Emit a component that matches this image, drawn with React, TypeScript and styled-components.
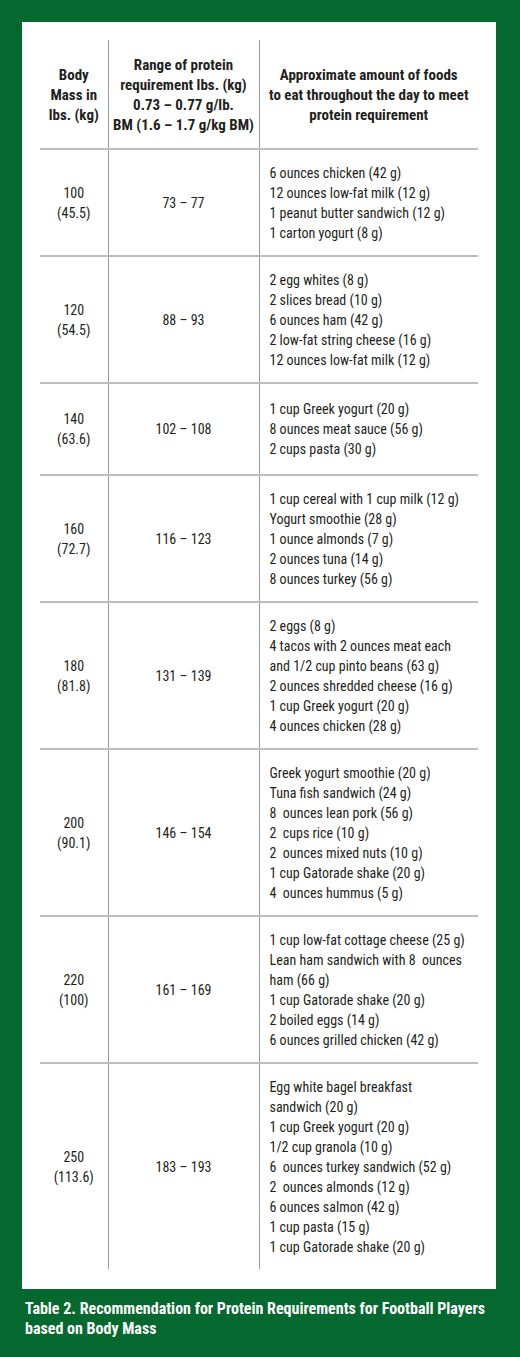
import React from 'react';
import styled, { createGlobalStyle } from 'styled-components';

const GlobalStyle = createGlobalStyle`
  html, body {
    margin: 0;
    padding: 0;
    background: #05692f; /* green */
  }
`;

const Page = styled.div`
  width: 520px;
  height: 1357px;
  overflow: hidden;
  box-sizing: border-box;
  padding: 22px 24px 0 22px;
  background: #05692f;
  font-family: "Roboto Condensed", Roboto, "Liberation Sans", sans-serif;
  font-stretch: condensed;
  color: #231f20;
`;

const Panel = styled.div`
  background: #ffffff;
  padding: 18px 18px 20px 18px;
`;

const Table = styled.table`
  width: 438px;
  border-collapse: collapse;
  table-layout: fixed;
  font-size: 14px;
  line-height: 20px;
`;

const Row = styled.tr<{ $last?: boolean }>`
  border-bottom: ${(p) => (p.$last ? 'none' : '2px solid #bdbdbd')};
`;

const HeadCell = styled.th`
  padding: 15px 0 13px;
  font-size: 15px;
  font-weight: bold;
  text-align: center;
  vertical-align: middle;
  white-space: nowrap;
  & + & {
    border-left: 1px solid #9a9a9a;
  }
`;

const Cell = styled.td<{ $left?: boolean; $loose?: boolean }>`
  padding: ${(p) => (p.$loose ? '15px 0 15px' : '13px 0 12px')};
  padding-left: ${(p) => (p.$left ? 10 : 0)}px;
  text-align: ${(p) => (p.$left ? 'left' : 'center')};
  vertical-align: middle;
  white-space: pre;
  & + & {
    border-left: 1px solid #9a9a9a;
  }
`;

const Caption = styled.p`
  margin: 10px 0 0 3px;
  color: #ffffff;
  font-weight: bold;
  font-size: 16px;
  line-height: 20px;
`;

type Entry = { mass: string; kg: string; range: string; foods: string[]; loose?: boolean };

const rows: Entry[] = [
  {
    mass: '100',
    kg: '(45.5)',
    range: '73 – 77',
    foods: [
      '6 ounces chicken (42 g)',
      '12 ounces low-fat milk (12 g)',
      '1 peanut butter sandwich (12 g)',
      '1 carton yogurt (8 g)',
    ],
  },
  {
    mass: '120',
    kg: '(54.5)',
    range: '88 – 93',
    foods: [
      '2 egg whites (8 g)',
      '2 slices bread (10 g)',
      '6 ounces ham (42 g)',
      '2 low-fat string cheese (16 g)',
      '12 ounces low-fat milk (12 g)',
    ],
  },
  {
    mass: '140',
    kg: '(63.6)',
    range: '102 – 108',
    loose: true,
    foods: ['1 cup Greek yogurt (20 g)', '8 ounces meat sauce (56 g)', '2 cups pasta (30 g)'],
  },
  {
    mass: '160',
    kg: '(72.7)',
    range: '116 – 123',
    foods: [
      '1 cup cereal with 1 cup milk (12 g)',
      'Yogurt smoothie (28 g)',
      '1 ounce almonds (7 g)',
      '2 ounces tuna (14 g)',
      '8 ounces turkey (56 g)',
    ],
  },
  {
    mass: '180',
    kg: '(81.8)',
    range: '131 – 139',
    foods: [
      '2 eggs (8 g)',
      '4 tacos with 2 ounces meat each',
      'and 1/2 cup pinto beans (63 g)',
      '2 ounces shredded cheese (16 g)',
      '1 cup Greek yogurt (20 g)',
      '4 ounces chicken (28 g)',
    ],
  },
  {
    mass: '200',
    kg: '(90.1)',
    range: '146 – 154',
    foods: [
      'Greek yogurt smoothie (20 g)',
      'Tuna fish sandwich (24 g)',
      '8  ounces lean pork (56 g)',
      '2  cups rice (10 g)',
      '2  ounces mixed nuts (10 g)',
      '1 cup Gatorade shake (20 g)',
      '4  ounces hummus (5 g)',
    ],
  },
  {
    mass: '220',
    kg: '(100)',
    range: '161 – 169',
    foods: [
      '1 cup low-fat cottage cheese (25 g)',
      'Lean ham sandwich with 8  ounces',
      'ham (66 g)',
      '1 cup Gatorade shake (20 g)',
      '2 boiled eggs (14 g)',
      '6 ounces grilled chicken (42 g)',
    ],
  },
  {
    mass: '250',
    kg: '(113.6)',
    range: '183 – 193',
    foods: [
      'Egg white bagel breakfast',
      'sandwich (20 g)',
      '1 cup Greek yogurt (20 g)',
      '1/2 cup granola (10 g)',
      '6  ounces turkey sandwich (52 g)',
      '2  ounces almonds (12 g)',
      '6 ounces salmon (42 g)',
      '1 cup pasta (15 g)',
      '1 cup Gatorade shake (20 g)',
    ],
  },
];

const App: React.FC = () => {
  return (
    <>
      <GlobalStyle />
      <Page>
        <Panel>
          <Table>
            <colgroup>
              <col style={{ width: 68 }} />
              <col style={{ width: 151 }} />
              <col style={{ width: 219 }} />
            </colgroup>
            <thead>
              <Row>
                <HeadCell>
                  Body
                  <br />
                  Mass in
                  <br />
                  lbs. (kg)
                </HeadCell>
                <HeadCell>
                  Range of protein
                  <br />
                  requirement lbs. (kg)
                  <br />
                  0.73 – 0.77 g/lb.
                  <br />
                  BM (1.6 – 1.7 g/kg BM)
                </HeadCell>
                <HeadCell>
                  Approximate amount of foods
                  <br />
                  to eat throughout the day to meet
                  <br />
                  protein requirement
                </HeadCell>
              </Row>
            </thead>
            <tbody>
              {rows.map((r, i) => (
                <Row key={r.mass} $last={i === rows.length - 1}>
                  <Cell $loose={r.loose}>{`${r.mass}\n${r.kg}`}</Cell>
                  <Cell $loose={r.loose}>{r.range}</Cell>
                  <Cell $loose={r.loose} $left>
                    {r.foods.join('\n')}
                  </Cell>
                </Row>
              ))}
            </tbody>
          </Table>
        </Panel>
        <Caption>
          Table 2. Recommendation for Protein Requirements for Football Players
          <br />
          based on Body Mass
        </Caption>
      </Page>
    </>
  );
};

export default App;
